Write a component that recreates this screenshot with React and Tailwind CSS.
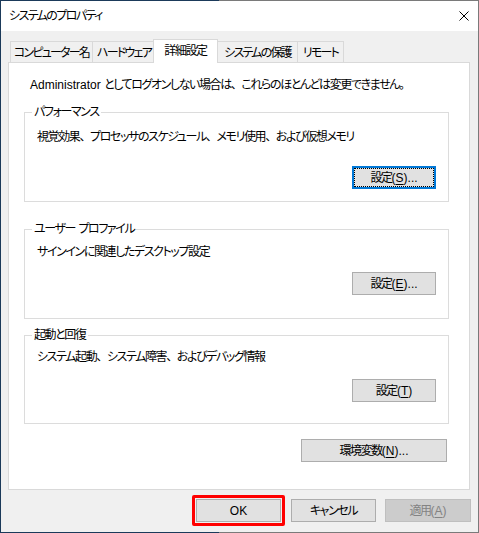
import React from 'react';

// フォント: 日本語は Noto Sans CJK JP をプロポーショナル (palt) で使い、字間を詰める
const font = "[font-family:'Liberation_Sans','Noto_Sans_CJK_JP',sans-serif] [font-feature-settings:'palt'] tracking-[-1.4px]";

// 英字部分は字間を戻す
function L({ children }) {
  return <span className="tracking-normal">{children}</span>;
}

// 読点は全角幅のまま表示する
function J({ t }) {
  const parts = t.split('、');
  return parts.map((p, i) => (
    <React.Fragment key={i}>
      {p}
      {i < parts.length - 1 && <span className="[font-feature-settings:normal]">、</span>}
    </React.Fragment>
  ));
}

// 下線付きアクセスキー
function Key({ k }) {
  return <span className="underline underline-offset-2">{k}</span>;
}

// 通常のボタン
function Btn({ children, w = 'w-[84px]', focused = false, disabled = false }) {
  return (
    <button
      type="button"
      className={
        'relative h-[23px] shrink-0 flex items-center justify-center whitespace-nowrap text-[12px] leading-[16px] ' +
        w +
        (disabled
          ? ' bg-[#cccccc] border border-[#bfbfbf] text-[#838383]'
          : focused
          ? ' bg-[#e1e1e1] border-2 border-[#0078d7] text-black'
          : ' bg-[#e1e1e1] border border-[#adadad] text-black')
      }
    >
      {focused && <span className="absolute inset-0 border border-dotted border-black" />}
      <span className="relative">{children}</span>
    </button>
  );
}

// グループボックス
function Group({ title, children, className }) {
  return (
    <div className={'relative border border-[#dcdcdc] ' + className}>
      <span className="absolute -top-[9px] left-[7px] bg-white px-[2px] text-[12px] leading-[16px] whitespace-nowrap">{title}</span>
      {children}
    </div>
  );
}

// タブ
function Tab({ label, w, selected = false, last = false }) {
  if (selected) {
    return (
      <div className={'relative z-10 -ml-[2px] -mr-[1px] -mb-px h-[24px] bg-white border-l border-t border-r border-[#d9d9d9] flex justify-center pt-[3px] text-[12px] leading-[16px] whitespace-nowrap ' + w}>
        {label}
      </div>
    );
  }
  return (
    <div className={'h-[21px] bg-[#f0f0f0] border-l border-t border-[#d9d9d9] flex justify-center pt-[3px] text-[12px] leading-[16px] whitespace-nowrap tracking-[-1.8px] ' + (last ? 'border-r ' : '') + w}>
      {label}
    </div>
  );
}

export default function App() {
  return (
    <div className={'relative w-[479px] h-[533px] border border-[#7a7a7a] border-l-[#1b3a5a] bg-[#f0f0f0] flex flex-col text-black ' + font}>
      {/* 枠の濃い部分 */}
      <div className="absolute -top-px -left-px w-[219px] h-px bg-[#1b3a5a]" />
      <div className="absolute -bottom-px -left-px w-[219px] h-px bg-[#1b3a5a]" />

      {/* タイトルバー */}
      <div className="h-[30px] bg-white flex items-center justify-between pl-[8px] pr-[9px]">
        <span className="text-[12px] leading-[16px] tracking-[-1.6px]">システムのプロパティ</span>
        <svg width="10" height="10" viewBox="0 0 10 10">
          <path d="M0.5 0.5 L9.5 9.5 M9.5 0.5 L0.5 9.5" stroke="#000" strokeWidth="1" />
        </svg>
      </div>

      {/* 本体 */}
      <div className="flex-1 flex flex-col pl-[7px] pt-[8px]">
        {/* タブ */}
        <div className="flex items-end h-[23px] ml-[2px]">
          <Tab label="コンピューター名" w="w-[82px]" />
          <Tab label="ハードウェア" w="w-[63px]" />
          <Tab label="詳細設定" w="w-[65px]" selected />
          <Tab label="システムの保護" w="w-[80px]" />
          <Tab label="リモート" w="w-[47px]" last />
        </div>

        {/* タブパネル */}
        <div className="w-[462px] h-[428px] bg-white border border-[#d9d9d9] flex flex-col pl-[15px] pr-[20px] pt-[14px]">
          <p className="ml-[6px] text-[12px] leading-[16px] whitespace-nowrap">
            <L>Administrator </L><J t="としてログオンしない場合は、これらのほとんどは変更できません。" />
          </p>

          {/* パフォーマンス */}
          <Group title="パフォーマンス" className="mt-[19px] h-[90px] flex flex-col pt-[16px] pl-[12px] pr-[12px]">
            <p className="text-[12px] leading-[16px]"><J t="視覚効果、プロセッサのスケジュール、メモリ使用、および仮想メモリ" /></p>
            <div className="mt-[21px] flex justify-end">
              <Btn focused>設定<L>(<Key k="S" />)...</L></Btn>
            </div>
          </Group>

          {/* ユーザー プロファイル */}
          <Group title={<>ユーザー<L> </L>プロファイル</>} className="mt-[27px] h-[90px] flex flex-col pt-[14px] pl-[12px] pr-[12px]">
            <p className="text-[12px] leading-[16px]">サインインに関連したデスクトップ設定</p>
            <div className="mt-[12px] flex justify-end">
              <Btn>設定<L>(<Key k="E" />)...</L></Btn>
            </div>
          </Group>

          {/* 起動と回復 */}
          <Group title="起動と回復" className="mt-[16px] h-[89px] flex flex-col pt-[13px] pl-[12px] pr-[12px]">
            <p className="text-[12px] leading-[16px]"><J t="システム起動、システム障害、およびデバッグ情報" /></p>
            <div className="mt-[14px] flex justify-end">
              <Btn>設定<L>(<Key k="T" />)</L></Btn>
            </div>
          </Group>

          {/* 環境変数 */}
          <div className="mt-[15px] flex justify-end mr-[2px]">
            <Btn w="w-[146px]">環境変数<L>(<Key k="N" />)...</L></Btn>
          </div>
        </div>

        {/* 下部ボタン */}
        <div className="mt-[9px] flex justify-end gap-[10px] pr-[7px]">
          <div className="-m-[4px] p-[1px] border-[3px] border-[#ff0000] rounded-[2px] flex">
            <Btn w="w-[85px]"><L>OK</L></Btn>
          </div>
          <div className="flex gap-[9px]">
            <Btn w="w-[85px]">キャンセル</Btn>
            <Btn w="w-[86px]" disabled>適用<L>(<Key k="A" />)</L></Btn>
          </div>
        </div>
      </div>
    </div>
  );
}
